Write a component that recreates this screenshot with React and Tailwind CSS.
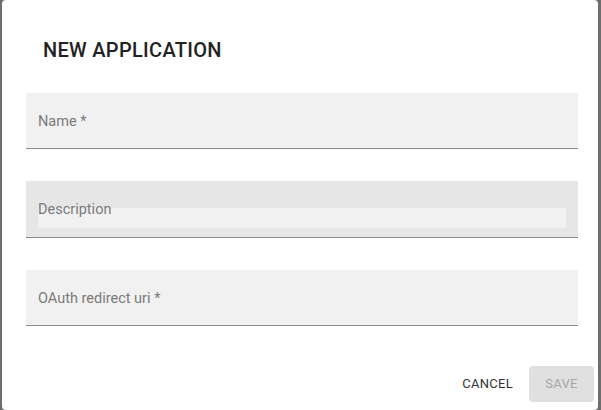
import React from 'react';

function Field({ label, textarea, active }) {
  return (
    <div
      className={`relative border-b border-[#8c8c8c] ${textarea ? 'h-[57px]' : 'h-[56px]'} ${active ? 'bg-[#e6e6e6]' : 'bg-[#f1f1f1]'}`}
    >
      {textarea && <div className="absolute left-[12px] right-[12px] top-[27px] h-[20px] bg-[#f1f1f1]" />}
      <span
        className={`absolute left-[12px] top-[19px] text-[14.5px] leading-[20px] text-[#7a7a7a]`}
      >
        {label}
      </span>
    </div>
  );
}

export default function App() {
  return (
    <div className="w-[601px] h-[410px] bg-[#6e6e6e] font-['Roboto',sans-serif] overflow-hidden">
      <div className="ml-[2px] w-[596px] h-[410px] bg-white rounded-[4px] pt-[36px]">
        <h1 className="pl-[41px] text-[20px] leading-[28px] font-medium text-[#222] tracking-[0.3px]">NEW APPLICATION</h1>
        <div className="mt-[29px] ml-[24px] mr-[20px] flex flex-col gap-[32px]">
          <Field label="Name *" />
          <Field label="Description" textarea active />
          <Field label="OAuth redirect uri *" />
        </div>
        <div className="mt-[40px] pr-[4px] flex justify-end items-center gap-[16px]">
          <button className="h-[36px] text-[13px] text-[#333] tracking-[0.3px]">CANCEL</button>
          <button className="h-[36px] w-[65px] rounded-[4px] bg-[#e0e0e0] text-[13px] text-[#a6a6a6] tracking-[0.3px]">SAVE</button>
        </div>
      </div>
    </div>
  );
}
